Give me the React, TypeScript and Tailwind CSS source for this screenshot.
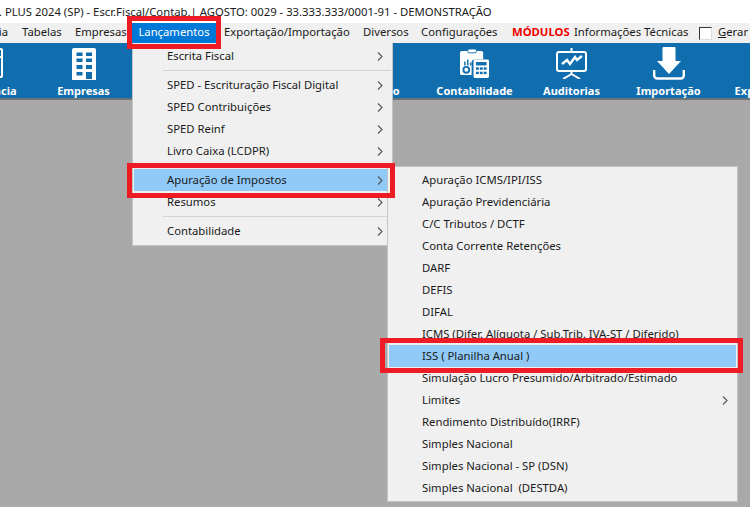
import React from "react";

const font = "font-['Noto_Sans','Open_Sans',sans-serif]";

const Chevron = () => (
  <svg width="6" height="9" viewBox="0 0 6 9" className="shrink-0">
    <path d="M1 0.5 L5 4.5 L1 8.5" fill="none" stroke="#555" strokeWidth="1.1" />
  </svg>
);

const Separator = () => <div className="my-[3px] mr-[1px] ml-[30px] h-px bg-[#d4d4d4]" />;

const MenuItem = ({ label, arrow, active }: { label: string; arrow?: boolean; active?: boolean }) => (
  <div
    className={`flex h-[22px] items-center justify-between whitespace-pre ${
      active ? "mx-[1px] bg-[#91c9f7] pr-[8px] pl-[33px]" : "pr-[9px] pl-[34px]"
    }`}
  >
    <span>{label}</span>
    {arrow && <Chevron />}
  </div>
);

const PartialIcon = () => (
  <svg width="32" height="30" viewBox="0 0 32 30" fill="none" stroke="#fff" strokeWidth="2">
    <path d="M3 1h27a1 1 0 0 1 1 1v26a1 1 0 0 1-1 1H3z" />
    <path d="M26 2v7h5" />
  </svg>
);

const BuildingIcon = () => (
  <svg width="24" height="32" viewBox="0 0 24 32" fill="#fff">
    <path d="M2 0h20a2 2 0 0 1 2 2v30H0V2a2 2 0 0 1 2-2z" />
    <g fill="#106eae">
      <rect x="4.5" y="4.5" width="6" height="3.5" />
      <rect x="14" y="4.5" width="6" height="3.5" />
      <rect x="4.5" y="10.5" width="6" height="3.5" />
      <rect x="14" y="10.5" width="6" height="3.5" />
      <rect x="4.5" y="17" width="6" height="4" />
      <rect x="14" y="17" width="6" height="4" />
      <rect x="4.5" y="24" width="6" height="3.5" />
      <rect x="14" y="24" width="6" height="7" />
    </g>
  </svg>
);

const AccountingIcon = () => (
  <svg width="29" height="30" viewBox="0 0 30 31" fill="#fff">
    <path d="M2 3h20a2 2 0 0 1 2 2v7h-9a3 3 0 0 0-3 3v13H2a2 2 0 0 1-2-2V5a2 2 0 0 1 2-2z" />
    <rect x="8" y="1" width="9" height="4" rx="1.5" stroke="#106eae" strokeWidth="1" />
    <path d="M5 14v4M8 12v6M11 15v3" stroke="#106eae" strokeWidth="1.5" />
    <circle cx="6.5" cy="22.5" r="3" fill="none" stroke="#106eae" strokeWidth="2" />
    <rect x="14" y="12" width="16" height="19" rx="1.5" />
    <rect x="16.5" y="14.5" width="11" height="3.5" fill="#106eae" />
    <g fill="#106eae">
      <rect x="16.5" y="20" width="3" height="2.5" />
      <rect x="20.5" y="20" width="3" height="2.5" />
      <rect x="24.5" y="20" width="3" height="2.5" />
      <rect x="16.5" y="24.5" width="3" height="2.5" />
      <rect x="20.5" y="24.5" width="3" height="2.5" />
      <rect x="24.5" y="24.5" width="3" height="2.5" />
    </g>
  </svg>
);

const ChartIcon = () => (
  <svg width="31" height="31" viewBox="0 0 31 31" fill="none" stroke="#fff">
    <rect x="1" y="4" width="29" height="19" rx="2" strokeWidth="2" />
    <path d="M15.5 0v4" strokeWidth="2" />
    <path d="M6 16l5-4 3 4 5-7 2 3 5-4" strokeWidth="2.4" />
    <path d="M15.5 23v3M15.5 26L7 31M15.5 26L24 31" strokeWidth="2" />
  </svg>
);

const DownloadIcon = () => (
  <svg width="32" height="33" viewBox="0 0 32 33" fill="#fff" className="mt-[-1px] ml-[1px]">
    <path d="M9.5 1a1 1 0 0 1 1-1h11a1 1 0 0 1 1 1v13H28L16 27 4 14h5.5z" />
    <path d="M1.2 23v5.5a3 3 0 0 0 3 3h23.6a3 3 0 0 0 3-3V23" fill="none" stroke="#fff" strokeWidth="2.4" />
  </svg>
);

const ToolButton = ({ label, icon }: { label?: string; icon?: React.ReactNode }) => (
  <div className="flex w-[97px] shrink-0 flex-col items-center">
    <div className="flex h-[33px] items-start justify-center">{icon}</div>
    <span className="mt-[3px] text-[11px] leading-[15px] font-bold whitespace-nowrap text-white">{label}</span>
  </div>
);

export default function App() {
  return (
    <div className={`relative h-[507px] w-[750px] overflow-hidden bg-[#a9a9a9] text-[11.3px] text-[#1a1a1a] ${font}`}>
      {/* title */}
      <div className="ml-[-1px] h-[23px] overflow-hidden bg-white leading-[23px] whitespace-nowrap">
        . PLUS 2024 (SP) - Escr.Fiscal/Contab.| AGOSTO: 0029 - 33.333.333/0001-91 - DEMONSTRAÇÃO
      </div>

      {/* menu bar */}
      <div className="flex h-[20px] items-start overflow-hidden bg-[#f0f0f0] leading-[18px] whitespace-nowrap">
        <span className="ml-[-14px] w-[22px] shrink-0 text-right">ia</span>
        <span className="ml-[14px] w-[53px] shrink-0">Tabelas</span>
        <span className="w-[57px] shrink-0">Empresas</span>
        <span className="h-[20px] w-[84px] shrink-0 bg-[#0078d7] text-center text-white">Lançamentos</span>
        <span className="ml-[8px] w-[139px] shrink-0">Exportação/Importação</span>
        <span className="w-[58px] shrink-0">Diversos</span>
        <span className="w-[91px] shrink-0">Configurações</span>
        <span className="w-[62px] shrink-0 font-bold text-[#f00000]">MÓDULOS</span>
        <span className="w-[125px] shrink-0">Informações Técnicas</span>
        <span className="mt-[4px] h-[13px] w-[13px] shrink-0 border border-[#333] border-r-[#dcdcdc] border-b-[#dcdcdc] bg-white" />
        <span className="ml-[6px]">
          <u>G</u>erar
        </span>
      </div>

      {/* toolbar */}
      <div className="flex h-[57px] overflow-hidden border-b-2 border-[#6b7378] bg-[#106eae] pt-[5px]">
        <div className="ml-[-62px] flex">
          <ToolButton label="Ocorrência" icon={<PartialIcon />} />
          <ToolButton label="Empresas" icon={<BuildingIcon />} />
          <ToolButton />
          <ToolButton />
          <ToolButton label="Relatório" />
          <div className="ml-[3px] flex">
            <ToolButton label="Contabilidade" icon={<AccountingIcon />} />
            <ToolButton label="Auditorias" icon={<ChartIcon />} />
            <ToolButton label="Importação" icon={<DownloadIcon />} />
            <ToolButton label="Exportação" />
          </div>
        </div>
      </div>

      {/* Lançamentos menu */}
      <div className="absolute top-[43px] left-[132px] w-[261px] border border-t-0 border-[#c4c4c4] bg-[#f0f0f0] pt-[2px] pb-[3px]">
        <MenuItem label="Escrita Fiscal" arrow />
        <Separator />
        <MenuItem label="SPED - Escrituração Fiscal Digital" arrow />
        <MenuItem label="SPED Contribuições" arrow />
        <MenuItem label="SPED Reinf" arrow />
        <MenuItem label="Livro Caixa (LCDPR)" arrow />
        <div className="h-[7px]" />
        <MenuItem label="Apuração de Impostos" arrow active />
        <MenuItem label="Resumos" arrow />
        <Separator />
        <MenuItem label="Contabilidade" arrow />
      </div>

      {/* Apuração submenu */}
      <div className="absolute top-[166px] left-[387px] w-[351px] border border-[#c4c4c4] bg-[#f0f0f0] py-[2px]">
        <MenuItem label="Apuração ICMS/IPI/ISS" />
        <MenuItem label="Apuração Previdenciária" />
        <MenuItem label="C/C Tributos / DCTF" />
        <MenuItem label="Conta Corrente Retenções" />
        <MenuItem label="DARF" />
        <MenuItem label="DEFIS" />
        <MenuItem label="DIFAL" />
        <MenuItem label="ICMS (Difer. Alíquota / Sub.Trib. IVA-ST / Diferido)" />
        <MenuItem label="ISS ( Planilha Anual )" active />
        <MenuItem label="Simulação Lucro Presumido/Arbitrado/Estimado" />
        <MenuItem label="Limites" arrow />
        <MenuItem label="Rendimento Distribuído(IRRF)" />
        <MenuItem label="Simples Nacional" />
        <MenuItem label="Simples Nacional - SP (DSN)" />
        <MenuItem label="Simples Nacional  (DESTDA)" />
      </div>

      {/* annotations */}
      <div className="absolute top-[16px] left-[127px] h-[33px] w-[94px] border-[5px] border-[#ed1c24]" />
      <div className="absolute top-[163px] left-[127px] h-[35px] w-[268px] border-[5px] border-[#ed1c24]" />
      <div className="absolute top-[338px] left-[380px] h-[35px] w-[363px] border-[5px] border-[#ed1c24]" />
    </div>
  );
}
